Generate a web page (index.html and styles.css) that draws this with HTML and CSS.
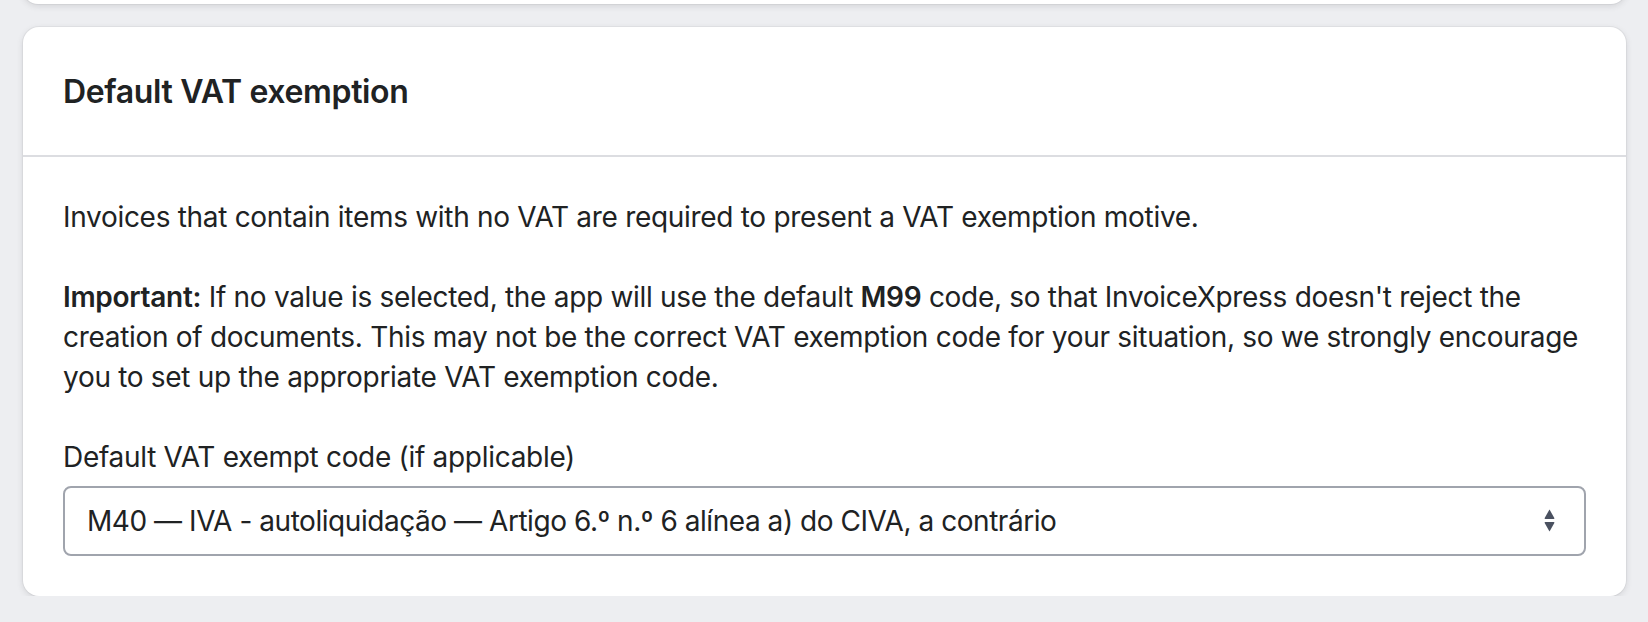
FILE: index.html
```html
<!DOCTYPE html>
<html lang="en">
<head>
    <meta charset="UTF-8">
    <meta name="viewport" content="width=device-width, initial-scale=1.0">
    <title>Default VAT exemption</title>
    <link rel="stylesheet" href="styles.css">
</head>
<body>
    <div class="page">
        <div class="card card-prev"></div>

        <div class="card">
            <div class="card-header">
                <h2 class="card-title">Default VAT exemption</h2>
            </div>

            <div class="card-section">
                <p>Invoices that contain items with no VAT are required to present a VAT exemption motive.</p>
                <p><strong>Important:</strong> If no value is selected, the app will use the default <strong>M99</strong> code, so that InvoiceXpress doesn't reject the creation of documents. This may not be the correct VAT exemption code for your situation, so we strongly encourage you to set up the appropriate VAT exemption code.</p>

                <label class="field-label" for="vat-exempt-code">Default VAT exempt code (if applicable)</label>
                <div class="select">
                    <select id="vat-exempt-code">
                        <option value="">Select a code</option>
                        <option value="M40" selected>M40 — IVA - autoliquidação — Artigo 6.º n.º 6 alínea a) do CIVA, a contrário</option>
                        <option value="M99">M99 — Não sujeito; não tributado (ou similar)</option>
                    </select>
                    <svg class="select-icon" viewBox="0 0 10 22" width="11" height="23" aria-hidden="true">
                        <path d="M5 0.5 L9.6 8.6 Q10 9.5 9 9.5 L1 9.5 Q0 9.5 0.4 8.6 Z"/>
                        <path d="M5 21.5 L9.6 13.4 Q10 12.5 9 12.5 L1 12.5 Q0 12.5 0.4 13.4 Z"/>
                    </svg>
                </div>
            </div>
        </div>
    </div>
</body>
</html>
```

FILE: styles.css
```css
body {
    margin: 0;
    padding: 0;
    background-color: #edeef1;
    color: #202223;
    font-family: Inter, "Noto Sans", sans-serif;
    font-size: 28px;
    line-height: 40px;
    letter-spacing: -0.3px;
}

.page {
    padding: 0 22px 0 23px;
}

.card {
    background-color: #ffffff;
    border-radius: 16px;
    box-shadow: 0 0 0 1px rgba(63, 63, 68, 0.05), 0 2px 6px 0 rgba(63, 63, 68, 0.15);
}

.card-prev {
    height: 30px;
    margin-top: -26px;
    margin-bottom: 23px;
}

.card-header {
    padding: 41px 40px 39px;
    border-bottom: 2px solid #dcdde1;
}

.card-title {
    margin: 0;
    font-size: 32px;
    line-height: 48px;
    font-weight: 600;
    letter-spacing: -0.35px;
}

.card-section {
    padding: 40px;
}

p {
    margin: 0 0 40px 0;
}

strong {
    font-weight: 600;
}

.field-label {
    display: block;
    margin-bottom: 9px;
}

.select {
    position: relative;
}

select {
    display: block;
    width: 100%;
    height: 70px;
    box-sizing: border-box;
    padding: 0 70px 0 22px;
    border: 2px solid #a0a4ad;
    border-radius: 8px;
    background-color: #ffffff;
    color: #202223;
    font-family: inherit;
    font-size: 28px;
    letter-spacing: -0.45px;
    appearance: none;
    -webkit-appearance: none;
    outline: none;
}

.select-icon {
    position: absolute;
    right: 31px;
    top: 23px;
    fill: #4a5160;
    pointer-events: none;
}
```
